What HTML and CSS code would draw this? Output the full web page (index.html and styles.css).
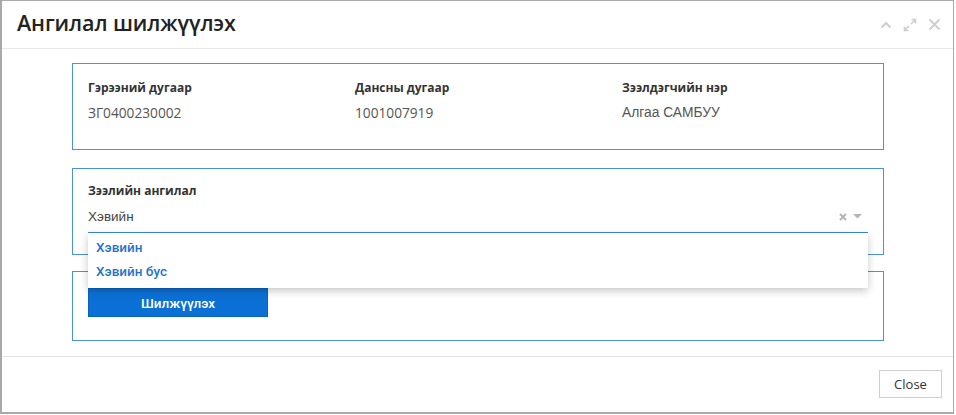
FILE: index.html
```html
<!DOCTYPE html>
<html lang="mn">
<head>
<meta charset="utf-8">
<title>Ангилал шилжүүлэх</title>
<link rel="stylesheet" href="styles.css">
</head>
<body>
<div class="modal">
  <div class="modal-header">
    <h1 class="modal-title">Ангилал шилжүүлэх</h1>
    <div class="header-tools">
      <svg class="tool" width="12" height="12" viewBox="0 0 12 12"><path d="M1.5 8.5 L6 4 L10.5 8.5" fill="none" stroke="#cfcfcf" stroke-width="2.2"/></svg>
      <svg class="tool" width="14" height="14" viewBox="0 0 14 14"><path d="M8.5 1.5 H12.5 V5.5 M12.5 1.5 L8 6 M5.5 12.5 H1.5 V8.5 M1.5 12.5 L6 8" fill="none" stroke="#cfcfcf" stroke-width="1.7"/></svg>
      <svg class="tool" width="13" height="13" viewBox="0 0 13 13"><path d="M1.5 1.5 L11.5 11.5 M11.5 1.5 L1.5 11.5" fill="none" stroke="#cfcfcf" stroke-width="2"/></svg>
    </div>
  </div>
  <div class="modal-body">
    <section class="card info-card">
      <div class="info-col">
        <div class="label">Гэрээний дугаар</div>
        <div class="value">ЗГ0400230002</div>
      </div>
      <div class="info-col">
        <div class="label">Дансны дугаар</div>
        <div class="value">1001007919</div>
      </div>
      <div class="info-col">
        <div class="label">Зээлдэгчийн нэр</div>
        <div class="value value-alt">Алгаа САМБУУ</div>
      </div>
    </section>
    <section class="card select-card">
      <div class="label">Зээлийн ангилал</div>
      <div class="select">
        <span class="select-value">Хэвийн</span>
        <span class="select-icons">
          <svg width="8" height="8" viewBox="0 0 8 8"><path d="M1 1 L7 7 M7 1 L1 7" stroke="#b5b5b5" stroke-width="2"/></svg>
          <svg width="9" height="5" viewBox="0 0 9 5"><path d="M0 0 H9 L4.5 4.5 Z" fill="#b5b5b5"/></svg>
        </span>
        <ul class="dropdown">
          <li class="option">Хэвийн</li>
          <li class="option">Хэвийн бус</li>
        </ul>
      </div>
    </section>
    <section class="card action-card">
      <button class="btn-primary">Шилжүүлэх</button>
    </section>
  </div>
  <div class="modal-footer">
    <button class="btn-close">Close</button>
  </div>
</div>
</body>
</html>
```
FILE: styles.css
```css
* { box-sizing: border-box; }
html, body { margin: 0; padding: 0; background: #fff; }
body {
  width: 956px;
  height: 415px;
  overflow: hidden;
  font-family: "Open Sans", "Liberation Sans", sans-serif;
  color: #333;
}
.modal {
  width: 954px;
  height: 414px;
  border: 1px solid #a9a9a9;
  border-left: 2px solid #a9a9a9;
  border-bottom: 2px solid #a9a9a9;
  background: #fff;
  display: flex;
  flex-direction: column;
}
.modal-header {
  height: 48px;
  border-bottom: 1px solid #e8e8e8;
  display: flex;
  align-items: center;
  justify-content: space-between;
  padding: 0 12px 0 15px;
}
.modal-title {
  margin: 0;
  font-size: 21.5px;
  font-weight: 600;
  color: #222;
  letter-spacing: -0.1px;
  position: relative;
  top: -2px;
}
.header-tools {
  display: flex;
  align-items: center;
  gap: 11px;
  position: relative;
  top: 0;
}
.modal-body {
  height: 308px;
  padding: 14px 0 0 70px;
  display: flex;
  flex-direction: column;
  border-bottom: 1px solid #e5e5e5;
}
.card {
  width: 812px;
  border: 1px solid #4a92dc;
  padding: 0 15px;
  background: #fff;
}
.info-card {
  height: 87px;
  display: flex;
  padding-top: 15px;
}
.info-col { flex: 0 0 267px; }
.label {
  font-size: 12px;
  font-weight: 700;
  color: #333;
  line-height: 18px;
}
.value {
  font-size: 13.7px;
  color: #555;
  line-height: 18px;
  margin-top: 7px;
}
.value-alt { font-family: "Liberation Sans", Arial, sans-serif; font-size: 13.8px; }
.select-card {
  height: 87px;
  margin-top: 18px;
  padding-top: 13px;
  position: relative;
  z-index: 2;
}
.select {
  position: relative;
  height: 32px;
  border-bottom: 1px solid #3b87d6;
  display: flex;
  align-items: center;
  justify-content: space-between;
  margin-top: 1px;
}
.select-value {
  font-size: 13.5px;
  color: #444;
  font-family: "Liberation Sans", Arial, sans-serif;
}
.select-icons {
  display: flex;
  align-items: center;
  gap: 6px;
  padding-right: 6px;
}
.dropdown {
  position: absolute;
  top: 32px;
  left: 0;
  right: 0;
  margin: 0;
  padding: 2px 0 5px;
  list-style: none;
  background: #fff;
  box-shadow: 0 3px 8px rgba(0,0,0,0.22);
}
.option {
  height: 24px;
  line-height: 24px;
  padding-left: 8px;
  font-family: Roboto, "Liberation Sans", Arial, sans-serif;
  font-size: 13.5px;
  font-weight: 500;
  color: #1f73cf;
}
.action-card {
  height: 70px;
  margin-top: 16px;
  padding-top: 16px;
}
.btn-primary {
  width: 180px;
  height: 29px;
  border: 1px solid #0a62bd;
  background: #0b70d6;
  color: #fff;
  font-family: Roboto, "Liberation Sans", Arial, sans-serif;
  font-size: 13.5px;
  font-weight: 500;
  padding: 0;
}
.modal-footer {
  flex: 1;
  display: flex;
  justify-content: flex-end;
  align-items: center;
  padding: 0 11px 2px 0;
}
.btn-close {
  width: 63px;
  height: 28px;
  border: 1px solid #cfcfcf;
  background: #fff;
  font-family: "Open Sans", sans-serif;
  font-size: 13px;
  color: #333;
  padding: 0;
}
```
